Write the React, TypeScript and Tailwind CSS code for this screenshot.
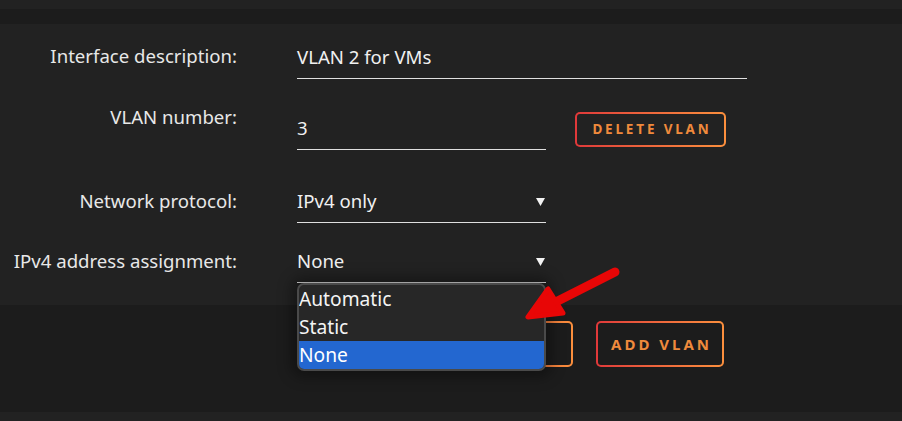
const font = { fontFamily: '"Noto Sans", "Open Sans", sans-serif' };

function Caret() {
  return (
    <svg width="9" height="9" viewBox="0 0 9 9" className="absolute right-[1px] top-[8px]">
      <polygon points="0,1 9,1 4.5,9" fill="#f2f2f2" />
    </svg>
  );
}

function GradientButton({ label, className, textClass }: { label: string; className: string; textClass: string }) {
  return (
    <div className={`rounded-[5px] bg-gradient-to-r from-[#e0383a] to-[#fb8f3d] p-[2px] ${className}`}>
      <div className="flex h-full w-full items-center justify-center rounded-[3px] bg-inherit">
        <span className={`font-bold text-[#f08a3c] ${textClass}`}>{label}</span>
      </div>
    </div>
  );
}

function Label({ children }: { children: string }) {
  return <div className="w-[237px] shrink-0 text-right text-[18.6px] leading-6 text-[#e8e8e8]">{children}</div>;
}

export default function App() {
  return (
    <div className="relative h-[421px] w-[902px] overflow-hidden bg-[#222222]" style={font}>
      <div className="h-[9px]" />
      <div className="h-[15px] bg-[#1c1c1c]" />

      {/* form panel */}
      <div className="flex h-[281px] flex-col bg-[#222222] pt-[20px]">
        <div className="flex items-start">
          <Label>Interface description:</Label>
          <div className="ml-[60px] h-[35px] w-[450px] border-b border-[#e0e0e0] pt-[1px] text-[18.6px] leading-6 text-[#f0f0f0]">
            VLAN 2 for VMs
          </div>
        </div>

        <div className="mt-[26px] flex items-start">
          <Label>VLAN number:</Label>
          <div className="ml-[60px] h-[45px] w-[249px] border-b border-[#e0e0e0] pt-[11px] text-[18.6px] leading-6 text-[#f0f0f0]">
            3
          </div>
          <div className="bg-[#222222] ml-[29px] mt-[7px]">
            <GradientButton label="DELETE VLAN" className="h-[35px] w-[151px] bg-[#222222]" textClass="text-[13.5px] tracking-[0.21em] pl-[3px]" />
          </div>
        </div>

        <div className="mt-[39px] flex items-start">
          <Label>Network protocol:</Label>
          <div className="relative ml-[60px] h-[34px] w-[249px] border-b border-[#e0e0e0] text-[18.6px] leading-6 text-[#f0f0f0]">
            IPv4 only
            <Caret />
          </div>
        </div>

        <div className="mt-[26px] flex items-start">
          <Label>IPv4 address assignment:</Label>
          <div className="relative ml-[60px] h-[34px] w-[249px] border-b border-[#e0e0e0] text-[18.6px] leading-6 text-[#f0f0f0]">
            None
            <Caret />
            {/* open select list */}
            <div className="absolute left-0 top-[34px] z-10 w-[249px] overflow-hidden rounded-[7px] border-2 border-[#4a4a4a] bg-[#272727] shadow-[0_0_14px_6px_rgba(0,0,0,0.35)]">
              <div className="h-[28px] text-[19.2px] leading-[28px] text-[#f4f4f4]">Automatic</div>
              <div className="h-[28px] text-[19.2px] leading-[28px] text-[#f4f4f4]">Static</div>
              <div className="h-[28px] bg-[#2367d0] text-[19.2px] leading-[28px] text-white">None</div>
            </div>
          </div>
        </div>
      </div>

      {/* action bar */}
      <div className="flex h-[107px] items-start gap-[23px] bg-[#1c1c1c] pl-[443px] pt-[16px]">
        <GradientButton label="SAVE" className="h-[46px] w-[130px] bg-[#1c1c1c]" textClass="text-[15px] tracking-[0.2em]" />
        <GradientButton label="ADD VLAN" className="h-[46px] w-[128px] bg-[#1c1c1c]" textClass="text-[15px] tracking-[0.2em] pl-[3px]" />
      </div>

      {/* red annotation arrow */}
      <svg className="pointer-events-none absolute left-0 top-0 z-20" width="902" height="421">
        <line x1="615" y1="272" x2="536" y2="312" stroke="#e80606" strokeWidth="9" strokeLinecap="round" />
        <path d="M548,289 L528,317 L563,313 Z" fill="#e80606" stroke="#e80606" strokeWidth="5" strokeLinejoin="round" />
      </svg>
    </div>
  );
}
